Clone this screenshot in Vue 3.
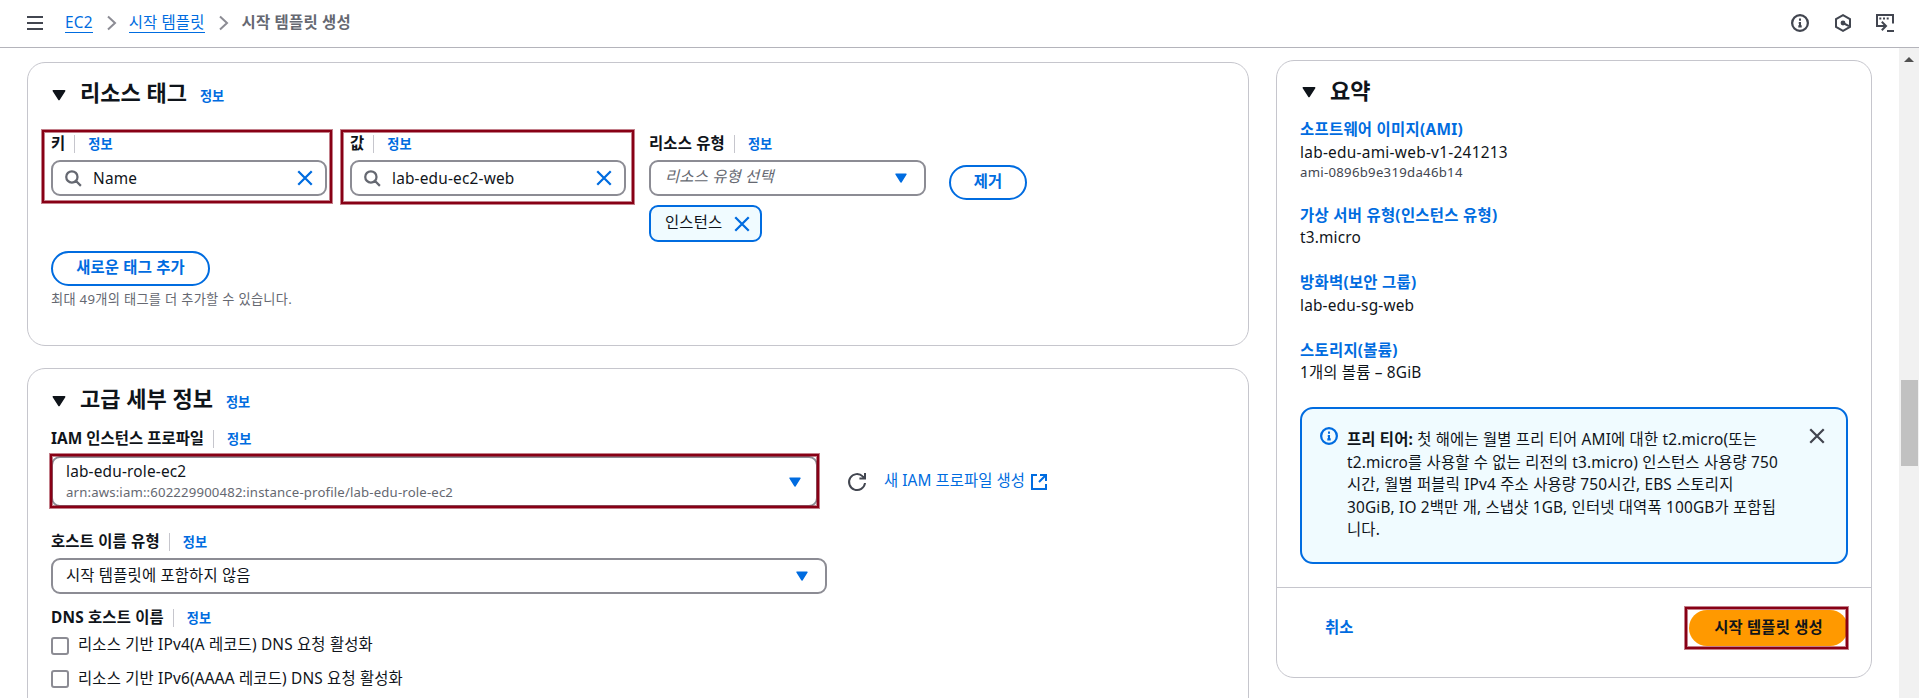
<script setup>
import { h } from 'vue'

const tags = [
  { label: '키', value: 'Name', cls: 'key' },
  { label: '값', value: 'lab-edu-ec2-web', cls: 'val' },
]
const dnsOptions = [
  '리소스 기반 IPv4(A 레코드) DNS 요청 활성화',
  '리소스 기반 IPv6(AAAA 레코드) DNS 요청 활성화',
]
const summary = [
  { title: '가상 서버 유형(인스턴스 유형)', text: 't3.micro' },
  { title: '방화벽(보안 그룹)', text: 'lab-edu-sg-web' },
  { title: '스토리지(볼륨)', text: '1개의 볼륨 – 8GiB' },
]

const Caret = () =>
  h('svg', { viewBox: '0 0 16 16', width: 18, height: 18 }, [
    h('path', { d: 'M3 4.200h10L8 12z', fill: 'currentColor', stroke: 'currentColor', 'stroke-width': 1.4, 'stroke-linejoin': 'round' }),
  ])
const Cross = () =>
  h('svg', { viewBox: '0 0 16 16', width: 18, height: 18 }, [
    h('path', { d: 'M2 2l12 12M14 2L2 14', fill: 'none', stroke: 'currentColor', 'stroke-width': 2 }),
  ])
const Search = () =>
  h('svg', { viewBox: '0 0 16 16', width: 18, height: 18 }, [
    h('path', { d: 'M7 12A5 5 0 1 0 7 2a5 5 0 0 0 0 10ZM15 15l-4.5-4.5', fill: 'none', stroke: 'currentColor', 'stroke-width': 2 }),
  ])
const Info = () =>
  h('svg', { viewBox: '0 0 16 16', width: 18, height: 18 }, [
    h('circle', { cx: 8, cy: 8, r: 7, fill: 'none', stroke: 'currentColor', 'stroke-width': 2 }),
    h('path', { d: 'M8 11V8H6.9M6.5 11h3M8 6V4', fill: 'none', stroke: 'currentColor', 'stroke-width': 1.8 }),
  ])
</script>

<template>
  <div class="app">
    <header class="top">
      <svg class="menu" viewBox="0 0 16 14" width="16" height="14"><path d="M0 1h16M0 7h16M0 13h16" stroke="currentColor" stroke-width="2" /></svg>
      <a class="crumb first">EC2</a>
      <svg class="chev" viewBox="0 0 10 14" width="10" height="14"><path d="M1 .5l7 6.500-7 6.500" /></svg>
      <a class="crumb">시작 템플릿</a>
      <svg class="chev" viewBox="0 0 10 14" width="10" height="14"><path d="M1 .5l7 6.500-7 6.500" /></svg>
      <span class="here">시작 템플릿 생성</span>
      <div class="tools">
        <Info />
        <svg viewBox="0 0 18 18" width="18" height="18"><path d="M9 1.200l7 3.900v7.800l-7 3.900-7-3.900V5.100z" fill="none" stroke="currentColor" stroke-width="2" /><circle cx="9" cy="9" r="2.400" fill="currentColor" /><path d="M9 9l6 3.200" stroke="currentColor" stroke-width="2" /></svg>
        <svg viewBox="0 0 18 18" width="18" height="18"><path d="M9.500 12H1V1h16v8.500M5.800 7.800l4.200 4.200-4.200 4.200M11 17h7" fill="none" stroke="currentColor" stroke-width="2" /><path d="M3.300 4.500h2M7 4.500h2M10.700 4.500h2" stroke="currentColor" stroke-width="2" /></svg>
      </div>
    </header>

    <div class="body">
      <main class="main">
        <section class="panel tags">
          <h2 class="head"><Caret /><span>리소스 태그</span><a class="info">정보</a></h2>
          <div class="fields">
            <div v-for="t in tags" :key="t.label" class="field" :class="t.cls">
              <div class="label"><b>{{ t.label }}</b><a class="info">정보</a></div>
              <div class="box"><Search class="grey" /><span class="value">{{ t.value }}</span><Cross class="blue" /></div>
            </div>
            <div class="field type">
              <div class="label"><b>리소스 유형</b><a class="info">정보</a></div>
              <div class="box select"><span class="hint">리소스 유형 선택</span><Caret class="blue caret" /></div>
              <div class="token"><span>인스턴스</span><Cross class="blue" /></div>
            </div>
            <button class="pill remove">제거</button>
          </div>
          <button class="pill add">새로운 태그 추가</button>
          <div class="help">최대 49개의 태그를 더 추가할 수 있습니다.</div>
        </section>

        <section class="panel details">
          <h2 class="head"><Caret /><span>고급 세부 정보</span><a class="info">정보</a></h2>
          <div class="label profile"><b>IAM 인스턴스 프로파일</b><a class="info">정보</a></div>
          <div class="iam">
            <div class="box role">
              <div class="stack"><span>lab-edu-role-ec2</span><span class="arn">arn:aws:iam::602229900482:instance-profile/lab-edu-role-ec2</span></div>
              <Caret class="blue caret" />
            </div>
            <svg class="refresh" viewBox="0 0 18 18" width="18" height="18"><path d="M17 10a8 8 0 1 1-2.300-6.600L16 4.600M17 0v5.400h-5.600" fill="none" stroke="currentColor" stroke-width="2" /></svg>
            <a class="create">새 IAM 프로파일 생성</a>
            <svg class="ext" viewBox="0 0 16 16" width="16" height="16"><path d="M6 1H1v14h14v-5M9 1h6v6M15 1L8 8" fill="none" stroke="currentColor" stroke-width="2" /></svg>
          </div>
          <div class="label host"><b>호스트 이름 유형</b><a class="info">정보</a></div>
          <div class="box select hosttype"><span>시작 템플릿에 포함하지 않음</span><Caret class="blue caret" /></div>
          <div class="label dns"><b>DNS 호스트 이름</b><a class="info">정보</a></div>
          <label v-for="o in dnsOptions" :key="o" class="check"><i></i><span>{{ o }}</span></label>
        </section>
      </main>

      <aside class="panel summary">
        <div class="content">
          <h2 class="head"><Caret /><span>요약</span></h2>
          <div class="item ami">
            <a>소프트웨어 이미지(AMI)</a><span>lab-edu-ami-web-v1-241213</span><small>ami-0896b9e319da46b14</small>
          </div>
          <div v-for="s in summary" :key="s.title" class="item"><a>{{ s.title }}</a><span>{{ s.text }}</span></div>
          <div class="alert">
            <Info class="blue" />
            <p><b>프리 티어:</b> 첫 해에는 월별 프리 티어 AMI에 대한 t2.micro(또는<br />t2.micro를 사용할 수 없는 리전의 t3.micro) 인스턴스 사용량 750<br />시간, 월별 퍼블릭 IPv4 주소 사용량 750시간, EBS 스토리지<br />30GiB, IO 2백만 개, 스냅샷 1GB, 인터넷 대역폭 100GB가 포함됩<br />니다.</p>
            <Cross class="close" />
          </div>
        </div>
        <footer class="foot"><a>취소</a><button class="primary">시작 템플릿 생성</button></footer>
      </aside>

      <div class="scroll"><i class="up"></i><i class="thumb"></i></div>
    </div>
  </div>
</template>

<style>
html, body { margin: 0; overflow: hidden; background: #fff; }
</style>

<style scoped>
.app { height: 698px; overflow: hidden; display: flex; flex-direction: column; background: #fff; color: #0f141a; font: 15.4px/22px "Noto Sans", "Noto Sans CJK KR", sans-serif; letter-spacing: .18px; white-space: nowrap; }
.app * { box-sizing: border-box; }
svg { display: block; flex: none; overflow: visible; }
a { color: #006ce0; font-weight: 700; }
.blue { color: #006ce0; }
.grey { color: #656871; }
.top { flex: none; height: 48px; border-bottom: 1px solid #b4b4bb; display: flex; align-items: center; padding: 0 25px 2px 27px; color: #424650; }
.crumb { font-weight: 400; line-height: 19px; border-bottom: 1px solid #006ce0; margin-top: 1px; }
.first { margin-left: 22px; }
.chev { margin: 0 12px 0 14px; fill: none; stroke: #8c8c94; stroke-width: 2; }
.here { font-weight: 700; color: #656871; margin-left: 1px; letter-spacing: .25px; }
.tools { margin-left: auto; display: flex; gap: 24.5px; }
.body { flex: 1; min-height: 0; display: flex; align-items: flex-start; }
.main { width: 1222px; margin-left: 27px; padding-top: 14px; }
.panel { border: 1px solid #c6c6cd; border-radius: 18px; }
.tags { height: 284px; padding: 16px 0 0 23px; }
.details { height: 400px; margin-top: 22px; padding: 16px 0 0 23px; }
.head { margin: 0; height: 28px; display: flex; align-items: center; font-size: 22px; line-height: 28px; letter-spacing: 0; }
.head svg { margin: 3px 12px 0 -1px; }
.head span { padding-bottom: 3px; }
.info { font-size: 13.2px; letter-spacing: 0; }
.head .info { margin: 6px 0 0 13px; }
.fields { display: flex; gap: 23px; margin-top: 27px; height: 117px; align-items: flex-start; }
.field { width: 276px; position: relative; }
.type { width: 277px; }
.label { display: flex; align-items: center; height: 20px; }
.label b { padding-bottom: 1px; }
.label .info { border-left: 1px solid #c6c6cd; margin-left: 9px; padding-left: 13px; line-height: 18px; }
.box { display: flex; align-items: center; height: 36px; border: 2px solid #8c8c94; border-radius: 9px; padding: 0 11px; }
.field .box { margin-top: 6px; }
.value { margin-left: 11px; flex: 1; padding-top: 2px; }
.box.select { padding: 0 15px 0 13px; }
.caret { margin-left: auto; width: 16px; height: 16px; }
.hint { font-style: italic; color: #656871; padding: 0 0 2px 1px; }
.key::after, .val::after, .role::after, .primary::after { content: ""; position: absolute; border: 2px solid #880015; box-shadow: 0 0 0 1px rgba(136, 0, 21, .5), inset 0 0 0 1px rgba(136, 0, 21, .5); }
.key::after { inset: -4px -5px -7px -9px; }
.val::after { inset: -4px -8px -8px -9px; }
.token { margin-top: 9px; width: 113px; height: 37px; border: 2px solid #006ce0; border-radius: 9px; background: #f0fbff; display: flex; align-items: center; gap: 11px; padding-left: 14px; }
.token span { padding-bottom: 2px; }
.pill { font: inherit; letter-spacing: inherit; font-weight: 700; height: 35px; padding: 0 0 2px; border: 2px solid #006ce0; border-radius: 18px; color: #006ce0; background: #fff; display: block; }
.remove { width: 78px; margin-top: 31px; }
.add { width: 159px; }
.help { color: #656871; font-size: 13.2px; line-height: 26px; letter-spacing: .31px; }
.profile { margin-top: 16px; letter-spacing: .05px; }
.iam { display: flex; align-items: center; margin-top: 7px; height: 52px; }
.role { position: relative; align-self: flex-start; width: 767px; height: 51px; padding: 0 13px; }
.role::after { inset: -4px -3px -3px -3px; }
.stack { display: flex; flex-direction: column; }
.arn { font-size: 13.2px; line-height: 19px; letter-spacing: .15px; color: #656871; }
.refresh { color: #424650; margin: 0 18px 0 30px; }
.create { font-weight: 400; letter-spacing: .06px; padding-bottom: 2px; }
.ext { color: #006ce0; margin-left: 6px; }
.host { margin-top: 24px; }
.hosttype { width: 776px; margin-top: 6px; }
.dns { margin: 14px 0 1.5px; }
.check { display: flex; align-items: center; height: 33px; }
.check i { width: 18px; height: 18px; border: 2px solid #8c8c94; border-radius: 3px; margin-right: 9px; }
.check span { padding-bottom: 2px; }
.check:last-child span { padding-bottom: 0; }
.summary { margin: 12px 0 0 27px; width: 596px; height: 618px; }
.summary .head svg { margin: 2px 12px 0 0; }
.content { height: 526px; padding: 16px 23px 0; }
.item { display: flex; flex-direction: column; height: 67.5px; }
.item a { letter-spacing: .3px; }
.item:nth-of-type(3) span { padding-top: 1px; }
.ami { margin-top: 14px; height: 85.5px; letter-spacing: .27px; }
.ami span { padding-top: 1px; }
.item small { font-size: 13.2px; line-height: 16px; color: #424650; }
.alert { height: 157px; border: 2px solid #006ce0; border-radius: 13px; background: #f0fbff; display: flex; align-items: flex-start; padding: 18px; }
.alert p { margin: 2px 0 0 9px; line-height: 22.5px; }
.close { color: #424650; margin: 0 2px 0 auto; }
.foot { border-top: 1px solid #c6c6cd; height: 90px; padding: 22px 23px 0 48px; display: flex; justify-content: space-between; align-items: flex-start; }
.foot a { line-height: 35px; }
.primary { position: relative; font: inherit; letter-spacing: inherit; font-weight: 700; width: 159px; height: 36px; border: 0; border-radius: 18px; padding: 0; background: #ff9900; color: #0f141a; }
.primary::after { inset: -3px 0 -3px -4px; }
.scroll { margin-left: auto; width: 20px; height: 650px; background: #f1f1f1; display: flex; flex-direction: column; align-items: center; }
.up { margin-top: 9px; border: 5px solid transparent; border-top: 0; border-bottom-color: #505050; }
.thumb { width: 17px; height: 86px; background: #c1c1c1; margin-top: 318px; }
</style>
